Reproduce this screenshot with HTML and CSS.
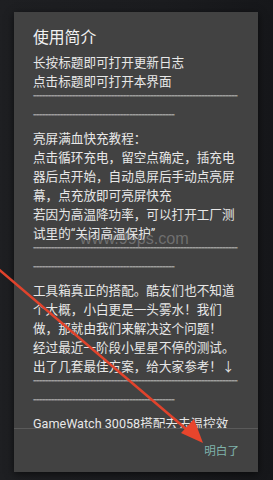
FILE: index.html
```html
<!DOCTYPE html>
<html lang="zh-CN">
<head>
<meta charset="utf-8">
<title>使用简介</title>
<link rel="stylesheet" href="styles.css">
</head>
<body>
<div class="screen">
  <div class="dialog">
    <div class="title">使用简介</div>
    <div class="scroll">
      <p class="line">长按标题即可打开更新日志</p>
      <p class="line">点击标题即可打开本界面</p>
      <div class="wave">~~~~~~~~~~~~~~~~~~~~~~~~~~~~~~~~~~~~~~~~~~~~~~~~~~~~~~~~~~~~~~~~~~~~</div>
      <div class="wave">~~~~~~~~~~~~~~~~~~~~~~~~~~~~~~~~~~~~~~~~~~~~~~~</div>
      <p class="line">亮屏满血快充教程：</p>
      <p class="line">点击循环充电，留空点确定，插充电器后点开始，自动息屏后手动点亮屏幕，点充放即可亮屏快充</p>
      <p class="line">若因为高温降功率，可以打开工厂测试里的“关闭高温保护”</p>
      <div class="wave">~~~~~~~~~~~~~~~~~~~~~~~~~~~~~~~~~~~~~~~~~~~~~~~~~~~~~~~~~~~~~~~~~~~~</div>
      <div class="wave">~~~~~~~~~~~~~~~~~~~~~~~~~~~~~~~~~~~~~~~~~~~~~~~</div>
      <p class="line">工具箱真正的搭配。酷友们也不知道个大概，小白更是一头雾水！我们做，那就由我们来解决这个问题！</p>
      <p class="line">经过最近一阶段小星星不停的测试。出了几套最佳方案，给大家参考！↓</p>
      <div class="wave">~~~~~~~~~~~~~~~~~~~~~~~~~~~~~~~~~~~~~~~~~~~~~~~~~~~~~~~~~~~~~~~~~~~~</div>
      <div class="wave">~~~~~~~~~~~~~~~~~~~~~~~~~~~~~~~~~~~~~~~~~~~~~~~</div>
      <p class="line">GameWatch 30058搭配去去温控效</p>
    </div>
    <div class="actions">
      <span class="btn">明白了</span>
    </div>
  </div>
  <div class="watermark">www.99ps.com</div>
  <svg class="arrow" width="273" height="480" viewBox="0 0 273 480" aria-hidden="true">
    <line x1="-4" y1="267" x2="192" y2="434" stroke="#e0432c" stroke-width="2.6" stroke-linecap="round"/>
    <polygon points="203,443 181,433 194,419" fill="#e8452c"/>
  </svg>
</div>
</body>
</html>
```

FILE: styles.css
```css
html, body {
  margin: 0;
  padding: 0;
}

body {
  width: 273px;
  height: 480px;
  overflow: hidden;
  background: #1b1c1f;
  font-family: Roboto, "Noto Sans CJK SC", sans-serif;
}

.screen {
  position: relative;
  width: 273px;
  height: 480px;
  padding-top: 12px;
  box-sizing: border-box;
  background: linear-gradient(90deg, #1e1f22 0%, #1b1c1f 60%, #16171a 100%);
}

.dialog {
  margin-left: 14px;
  width: 244px;
  height: 460px;
  background: #424242;
  display: flex;
  flex-direction: column;
  box-shadow: 0 2px 8px rgba(0, 0, 0, 0.6);
}

.title {
  padding: 16px 19px 0;
  font-size: 15.8px;
  line-height: 20px;
  color: #f2f2f2;
}

.scroll {
  height: 381px;
  overflow: hidden;
  padding: 5px 19px 0;
  box-sizing: border-box;
  border-bottom: 1px solid #5a5a5a;
}

.line {
  margin: 0;
  font-size: 12.6px;
  line-height: 19px;
  color: #e8e8e8;
}

.wave {
  height: 19px;
  box-sizing: border-box;
  padding-top: 1px;
  font-family: "Liberation Sans", sans-serif;
  font-weight: bold;
  font-size: 6px;
  line-height: 7px;
  letter-spacing: -0.5px;
  color: #dedede;
  text-shadow: 0 0.6px 0 rgba(200, 200, 200, 0.6);
  white-space: nowrap;
}

.actions {
  flex: 1;
  display: flex;
  justify-content: flex-end;
  align-items: center;
  padding: 0 19px 0 0;
}

.btn {
  font-size: 11.6px;
  line-height: 16px;
  color: #7fb3ab;
  margin-top: 1px;
}

.watermark {
  position: absolute;
  left: 80px;
  top: 228px;
  font-family: "Liberation Sans", sans-serif;
  font-size: 16.2px;
  line-height: 20px;
  color: rgba(200, 200, 200, 0.35);
}

.arrow {
  position: absolute;
  left: 0;
  top: 0;
}
```
